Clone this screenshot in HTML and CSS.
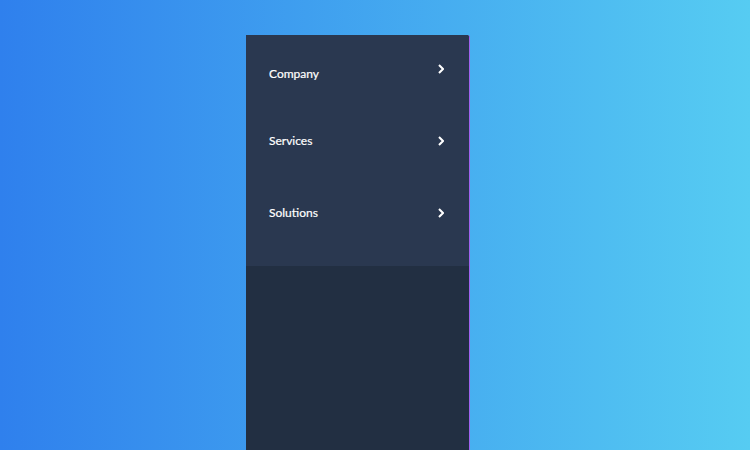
FILE: index.html
```html
<!DOCTYPE html>
<html>
<head>
<meta charset="utf-8">
<link rel="stylesheet" href="styles.css">
</head>
<body>
<div class="panel">
  <nav class="menu">
    <div class="item item--first"><span>Company</span><svg class="chev chev--up" width="6" height="10" viewBox="0 0 6 10"><path d="M1 1 L5 5 L1 9" fill="none" stroke="#fff" stroke-width="2"/></svg></div>
    <div class="item item--second"><span>Services</span><svg class="chev" width="6" height="10" viewBox="0 0 6 10"><path d="M1 1 L5 5 L1 9" fill="none" stroke="#fff" stroke-width="2"/></svg></div>
    <div class="item item--third"><span>Solutions</span><svg class="chev" width="6" height="10" viewBox="0 0 6 10"><path d="M1 1 L5 5 L1 9" fill="none" stroke="#fff" stroke-width="2"/></svg></div>
  </nav>
  <div class="bottom"></div>
</div>
</body>
</html>
```
FILE: styles.css
```css
html, body {
  margin: 0;
  height: 100%;
  overflow: hidden;
}
body {
  background: linear-gradient(90deg, #2f80ed 0%, #56ccf2 100%);
  font-family: Lato, "Open Sans", sans-serif;
}
.panel {
  margin: 35px 0 0 246px;
  width: 223px;
  height: 415px;
  border-right: 1px solid #a062ee;
  border-top-right-radius: 3px;
  display: flex;
  flex-direction: column;
  overflow: hidden;
  background: #222f42;
}
.menu {
  height: 231px;
  background: #2a3850;
  display: flex;
  flex-direction: column;
  box-sizing: border-box;
  padding-top: 30px;
}
.item {
  height: 18px;
  display: flex;
  align-items: center;
  justify-content: space-between;
  padding: 0 25px 0 23px;
  color: #fff;
  font-size: 12px;
  line-height: 18px;
  -webkit-text-stroke: 0.2px #fff;
}
.item--second { margin-top: 49px; }
.item--third { margin-top: 54px; }
.chev { display: block; }
.chev--up { margin-top: -10px; }
.bottom {
  flex: 1;
  background: #222f42;
}
```
